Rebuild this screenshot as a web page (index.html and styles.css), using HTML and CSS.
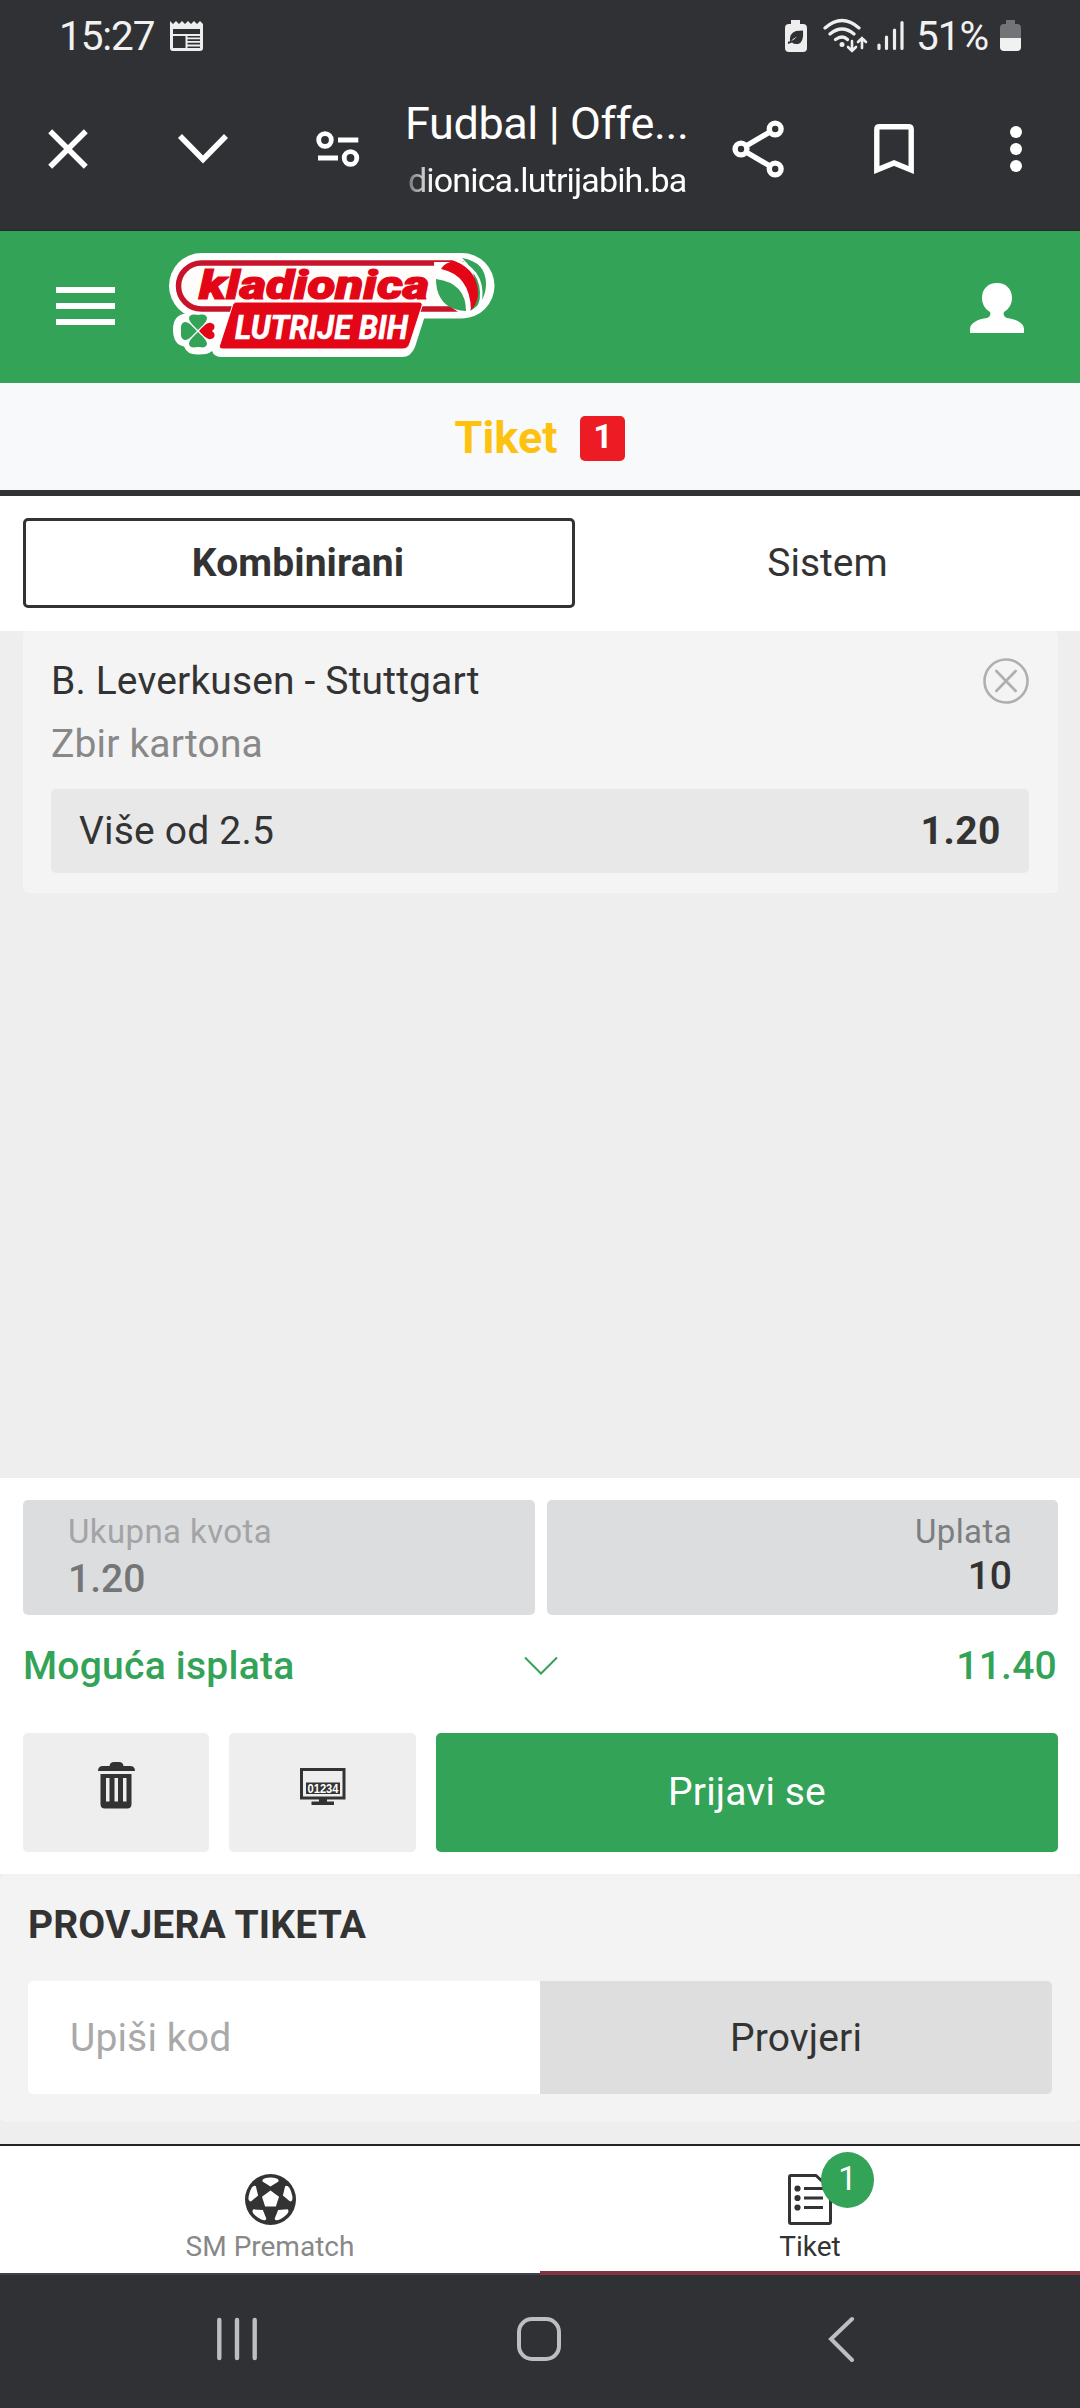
FILE: index.html
```html
<!DOCTYPE html>
<html lang="bs">
<head>
<meta charset="utf-8">
<title>Fudbal | Offer</title>
<link rel="stylesheet" href="styles.css">
</head>
<body>
<div class="status">
  <span class="clock">15:27</span>
  <svg class="news" width="34" height="30" viewBox="0 0 34 30"><path fill="#eee" fill-rule="evenodd" d="M0 0l3 3 3-3 3 3 3-3 3 3 3-3 3 3 3-3 3 3 3-3 3 3V27q0 3-3 3H3q-3 0-3-3zM3 8v5h27V8zM3 15v12h12.500V15zM17.500 15v1.500H30V15zM17.500 18.200v1.800H30v-1.800zM17.500 21.800v1.800H30v-1.800zM17.500 25.400v1.600H30v-1.600z"/></svg>
  <svg class="status-icons" width="124" height="36" viewBox="784 17 124 36">
    <path fill="#eee" d="M791 19h9v4h3q4 0 4 4v20q0 4-4 4h-14q-4 0-4-4V27q0-4 4-4h2z"/>
    <path fill="#303134" d="M790 41q-1-9 6-11l7-.500q1 12-5 13.500-4 .500-6-1.500l-4 1.500v-2.500q5 0 9-5-4 2-7 5.500z"/>
    <g fill="none" stroke="#eee" stroke-width="3.200" stroke-linecap="round">
      <path d="M825 27q17-15 34 0M830 33q12-10 24 0M835.500 38.500q7-5 12 0"/>
      <path stroke-width="2.600" d="M852 40v10m-4-4l4 4 4-4M862 47v-10m-4 4l4-4 4 4"/>
      <path d="M879 44v3.500M886.500 36v11.500M894.500 29v18.500M902 21.500v26"/>
    </g>
    <circle cx="842" cy="43.500" r="2.500" fill="#eee"/>
  </svg>
  <span class="percent">51%</span>
  <svg class="battery" width="21" height="32" viewBox="0 0 21 32"><path fill="#737477" d="M6 0h9v4h2q4 0 4 4v10H0V8q0-4 4-4h2z"/><path fill="#f1f1f1" d="M0 18h21v9q0 4-4 4H4q-4 0-4-4z"/></svg>
</div>

<div class="browser">
  <svg width="324" height="60" viewBox="40 119 324 60" fill="none" stroke="#fff" stroke-width="5.600">
    <path d="M50.200 131.200l35.600 35.600M85.800 131.200l-35.600 35.600M180 136l23 23.500 23-23.500"/>
    <g stroke-width="4.800"><circle cx="325" cy="140" r="6.300"/><circle cx="350.500" cy="158" r="6.300"/><path d="M338 140h20.300M318 158h20"/></g>
  </svg>
  <div class="page-id">
    <div class="page-title">Fudbal | Offe...</div>
    <div class="page-url">dionica.lutrijabih.ba</div>
  </div>
  <svg width="300" height="60" viewBox="728 119 300 60" fill="none" stroke="#fff" stroke-width="5.400">
    <path d="M775 129l-34 20 34 20"/>
    <g fill="#303134"><circle cx="741" cy="149" r="5.900"/><circle cx="775.200" cy="129" r="5.900"/><circle cx="775.200" cy="169" r="5.900"/></g>
    <path d="M876.800 170V129.500q0-2.700 2.700-2.700h29q2.700 0 2.700 2.700V170l-17.200-7z"/>
    <g fill="#fff" stroke="none"><circle cx="1016" cy="132" r="6"/><circle cx="1016" cy="149" r="6"/><circle cx="1016" cy="166" r="6"/></g>
  </svg>
</div>

<header class="site-head">
  <div class="burger"><i></i><i></i><i></i></div>
  <svg class="logo" width="326" height="105" viewBox="169 253 326 105">
    <g fill="#fff">
      <rect x="169" y="253" width="325.500" height="65.500" rx="32.700"/>
      <path d="M196 300h234l-15 47q-4 10-13 10H222q-8 0-10-6-4 4-15 3.500-10 0-13-8-11-2-11-17 0-14 12-16z"/>
    </g>
    <rect x="178.500" y="263" width="300" height="46" rx="23" fill="#fffdfa" stroke="#c8142a" stroke-width="5.500"/>
    <path fill="#fff" d="M434 262h45q12 10 11 27-3 22-30 24-26-14-26-51z"/>
    <path fill="#33a357" d="M462 258q24 4 24 26 0 18-16 27 14-34-8-53z"/>
    <path fill="#e30617" d="M441 269q4-7 14-8 24 10 23 35-2 10-7 14-1-35-30-41z"/>
    <path fill="none" stroke="#fff" stroke-width="2.500" d="M453 259q31 10 28 40-2 9-6 13"/>
    <path fill="#33a357" d="M436 279q30 4 30 32-24-1-29-22-1-5-1-10z"/>
    <path fill="#e30617" stroke="#fff" stroke-width="1" d="M237 302h182q4 0 3 4l-12 37q-2 6-7 6H223q-5 0-3-5l12-37q1-5 5-5z"/>
    <g fill="#33a357"><path d="M198 330c-4-4-9-8-9-12 1-5 7-3 9-3s8-2 9 3c0 4-5 8-9 12zM198 332c-4 4-9 8-9 12 1 5 7 3 9 3s8 2 9-3c0-4-5-8-9-12zM197 331c-4-4-8-9-12-9-5 1-4 7-4 9s-1 8 4 9c4 0 8-5 12-9z"/></g>
    <path fill="#e30617" d="M199 331c4-4 8-9 12-8 4 1 4 4 3 6l-2 2 2 2c1 2 1 5-3 6-4 1-8-4-12-8z"/>
    <text class="logo-top" x="199" y="298.500" textLength="230" lengthAdjust="spacingAndGlyphs">kladionica</text>
    <text class="logo-bottom" x="235" y="338.700" textLength="173" lengthAdjust="spacingAndGlyphs">LUTRIJE BIH</text>
  </svg>
  <svg class="user" width="54" height="50" viewBox="0 0 54 50"><path fill="#fff" d="M27 0C36 0 42 6 42 15c0 6-3 11-8 14-1 2 0 5 3 6 9 1 17 5 17 11v4H0v-4c0-6 8-10 17-11 3-1 4-4 3-6-5-3-8-8-8-14C12 6 18 0 27 0z"/></svg>
</header>

<div class="ticket-head"><span class="ticket-title">Tiket</span><span class="ticket-count">1</span></div>

<div class="tabs"><div class="tab tab-on">Kombinirani</div><div class="tab">Sistem</div></div>

<main class="list">
  <section class="bet">
    <div class="bet-top"><span>B. Leverkusen - Stuttgart</span>
      <svg width="46" height="46" viewBox="-23 -23 46 46" fill="none" stroke="#afafaf" stroke-width="2.600" stroke-linecap="round"><circle r="21.500"/><path d="M-9.700-10l19.400 20M9.700-10l-19.400 20"/></svg>
    </div>
    <div class="bet-market">Zbir kartona</div>
    <div class="bet-pick"><span>Više od 2.5</span><b>1.20</b></div>
  </section>
</main>

<section class="summary">
  <div class="fields">
    <div class="field field-odds"><span class="field-label">Ukupna kvota</span><span class="field-value">1.20</span></div>
    <div class="field field-stake"><span class="field-label">Uplata</span><span class="field-value">10</span></div>
  </div>
  <div class="payout"><span class="payout-label">Moguća isplata</span>
    <svg width="34" height="20" viewBox="0 0 34 20" fill="none" stroke="#33a357" stroke-width="2"><path d="M1 1.500l16 16 16-16"/></svg>
    <span class="payout-value">11.40</span></div>
  <div class="actions">
    <div class="action">
      <svg width="37" height="47" viewBox="0 0 37 47"><path fill="#333" fill-rule="evenodd" d="M0 9q0-5 5-5h6.500Q12 0 16 0h5q4 0 4.500 4H32q5 0 5 5zM2.500 12h31v30q0 4.500-4.500 4.500H7q-4.500 0-4.500-4.500zM8 16v23.500h3.500V16zM16.500 16v23.500H20V16zM25 16v23.500h3.500V16z"/></svg>
    </div>
    <div class="action">
      <svg width="46" height="38" viewBox="0 0 46 38"><path fill="none" stroke="#333" stroke-width="3" d="M1.500 1.500h42.500V30H1.500z"/><path fill="#333" d="M6 14.500h34V26H6zM19 30h8v3.500h7V37H11.500v-3.500H19z"/><text class="digits" x="7.500" y="24.700" textLength="31" lengthAdjust="spacingAndGlyphs">01234</text></svg>
    </div>
    <div class="submit">Prijavi se</div>
  </div>
</section>

<section class="check">
  <h2>PROVJERA TIKETA</h2>
  <div class="check-row"><div class="code">Upiši kod</div><div class="check-btn">Provjeri</div></div>
</section>

<nav class="tabbar">
  <div class="item">
    <svg width="51" height="51" viewBox="-25.500 -25.500 51 51"><circle r="25.500" fill="#333"/><g fill="#fff"><path d="M0-9l8.500 6.200L5.400 7H-5.400L-8.500-2.800z"/><path id="p" d="M-8-19.500Q-7-22 0-22T8-19.500V-18L0-13-8-18z"/><use href="#p" transform="rotate(72)"/><use href="#p" transform="rotate(144)"/><use href="#p" transform="rotate(216)"/><use href="#p" transform="rotate(288)"/></g></svg>
    <span>SM Prematch</span>
  </div>
  <div class="item item-on">
    <div class="doc">
      <svg width="44" height="51" viewBox="0 0 44 51"><path fill="none" stroke="#333" stroke-width="3" stroke-linejoin="round" d="M1.500 3q0-1.500 1.500-1.500H28L42.500 15v33q0 1.500-1.500 1.500H3q-1.500 0-1.500-1.500z"/><g fill="#333"><circle cx="9.500" cy="14.500" r="3.100"/><circle cx="9.500" cy="24" r="3.100"/><circle cx="9.500" cy="33.500" r="3.100"/><path d="M16 13h19v3H16zM16 22.500h19v3H16zM16 32h19v3H16z"/></g></svg>
      <span class="bubble">1</span>
    </div>
    <span>Tiket</span>
  </div>
</nav>

<footer class="sysnav">
  <svg width="40" height="46" viewBox="217 2315 40 46" fill="none" stroke="#bdbec0" stroke-width="4.400" stroke-linecap="round"><path d="M219.300 2319v38M237 2319v38M254.700 2319v38"/></svg>
  <svg width="44" height="46" viewBox="517 2315 44 46" fill="none" stroke="#bdbec0" stroke-width="4"><rect x="519" y="2318" width="40" height="40" rx="13"/></svg>
  <svg width="27" height="46" viewBox="829 2315 27 46" fill="none" stroke="#bdbec0" stroke-width="4" stroke-linecap="round"><path d="M853 2318l-21 20 21 21"/></svg>
</footer>
</body>
</html>
```
FILE: styles.css
```css
* { box-sizing: border-box; }
body {
  margin: 0;
  width: 1080px;
  height: 2408px;
  overflow: hidden;
  display: flex;
  flex-direction: column;
  background: #eee;
  color: #333;
  font: 400 39px/46px Roboto, "Liberation Sans", sans-serif;
  white-space: nowrap;
}
body > * { flex: none; }
svg { display: block; flex: none; }

.status {
  height: 72px;
  padding: 0 59px;
  display: flex;
  align-items: center;
  background: #303134;
  color: #f1f1f1;
  font-size: 40.5px;
}
.clock { width: 111px; letter-spacing: -1.1px; }
.status-icons { margin-left: auto; }
.percent { margin-left: 8px; width: 84px; letter-spacing: -1px; }

.browser {
  height: 159px;
  padding: 0 52px 3px 40px;
  display: flex;
  align-items: center;
  background: #303134;
  border-bottom: 2px solid #26312b;
  color: #fff;
}
.page-id { width: 286px; margin: 0 37px 0 41px; }
.page-title { font-size: 45px; line-height: 62px; letter-spacing: -0.4px; }
.page-url {
  padding-left: 3px;
  font-size: 34px;
  line-height: 50px;
  letter-spacing: -0.85px;
  -webkit-mask-image: linear-gradient(90deg, rgba(0,0,0,.25), #000 28px);
  mask-image: linear-gradient(90deg, rgba(0,0,0,.25), #000 28px);
}

.site-head {
  height: 152px;
  padding: 0 56px;
  display: flex;
  align-items: center;
  background: #33a357;
}
.burger { width: 59px; height: 38px; margin-bottom: 3px; display: flex; flex-direction: column; justify-content: space-between; }
.burger i { height: 6px; background: #fff; }
.logo { margin-left: 54px; margin-bottom: 4px; }
.user { margin-left: auto; margin-top: 2px; }
.logo-top { font: italic 900 41px Roboto, sans-serif; fill: #e30617; stroke: #e30617; stroke-width: 1.2px; }
.logo-bottom { font: italic 700 33.5px Roboto, sans-serif; fill: #fff; stroke: #fff; stroke-width: .6px; }

.ticket-head {
  height: 113px;
  padding-top: 3px;
  display: flex;
  align-items: center;
  justify-content: center;
  gap: 23px;
  background: #f8f9fb;
  border-bottom: 6px solid #333;
}
.ticket-title { color: #fdc210; font-size: 45px; font-weight: 700; }
.ticket-count {
  width: 45px;
  height: 45px;
  border-radius: 5px;
  background: #ed1c24;
  color: #fff;
  font-size: 34px;
  font-weight: 700;
  line-height: 41px;
  text-align: center;
}

.tabs { height: 135px; padding: 22px 0 23px 23px; display: flex; background: #fff; }
.tab { flex: 1; display: flex; align-items: center; justify-content: center; }
.tab-on { flex: 0 0 552px; padding-right: 2px; border: 3px solid #333; border-radius: 5px; font-weight: 700; letter-spacing: .1px; }

.list { height: 847px; padding: 0 22px 0 23px; }
.bet { height: 262px; padding: 27px 29px 0 28px; background: #f4f4f4; border-radius: 5px; }
.bet-top { height: 46px; display: flex; align-items: center; justify-content: space-between; letter-spacing: .15px; }
.bet-market { margin-top: 17px; color: #888; letter-spacing: .15px; }
.bet-pick {
  height: 84px;
  margin-top: 22px;
  padding: 0 28px;
  display: flex;
  align-items: center;
  justify-content: space-between;
  background: #e8e8e8;
  border-radius: 5px;
  letter-spacing: .2px;
}
.bet-pick b { letter-spacing: .5px; }

.summary { height: 396px; padding: 22px 22px 0 23px; background: #fff; }
.fields { height: 115px; display: grid; grid-template-columns: 1fr 1fr; gap: 12px; }
.field { padding: 9px 46px 0 45px; display: flex; flex-direction: column; background: #dcdddf; border-radius: 5px; }
.field-label { font-size: 33px; line-height: 46px; letter-spacing: .4px; }
.field-value { font-weight: 500; }
.field-odds { color: #747576; }
.field-odds .field-label { color: #a3a4a5; }
.field-odds .field-value { margin-top: 1px; }
.field-stake { align-items: flex-end; }
.field-stake .field-label { color: #7d7e80; }
.field-stake .field-value { margin-top: -2px; }
.payout {
  height: 118px;
  padding-bottom: 17px;
  display: grid;
  grid-template-columns: 1fr auto 1fr;
  align-items: center;
  color: #33a357;
  font-weight: 500;
  letter-spacing: .25px;
}
.payout-value { text-align: right; padding-right: 1px; }
.actions { height: 119px; display: grid; grid-template-columns: 186px 187px 1fr; gap: 20px; }
.action { display: flex; justify-content: center; padding-top: 29px; background: #eee; border-radius: 5px; }
.action + .action { padding-top: 35px; }
.submit { background: #33a357; color: #fff; border-radius: 5px; line-height: 118px; text-align: center; letter-spacing: .15px; }
.digits { font: 700 12px "Liberation Sans", sans-serif; fill: #fff; }

.check { height: 248px; padding: 28px 28px 0; background: #f3f3f3; border-radius: 6px; }
.check h2 { margin: 0; font-size: 39px; line-height: 46px; font-weight: 700; letter-spacing: .1px; }
.check-row { margin-top: 33px; height: 113px; display: grid; grid-template-columns: 1fr 1fr; line-height: 115px; border-radius: 5px; overflow: hidden; letter-spacing: .15px; }
.code { padding-left: 42px; background: #fff; color: #a9a9a9; }
.check-btn { background: #dedede; text-align: center; }

.tabbar { height: 131px; margin-top: 22px; display: grid; grid-template-columns: 1fr 1fr; background: #fff; border-top: 2px solid #222; }
.item {
  padding-top: 28px;
  display: flex;
  flex-direction: column;
  align-items: center;
  color: #888;
  font-size: 28px;
  line-height: 43px;
  border-bottom: 2px solid #3e4147;
}
.item-on { color: #333; border-bottom: 4px solid #83353f; }
.doc { position: relative; }
.bubble {
  position: absolute;
  left: 33px;
  top: -22px;
  width: 53px;
  height: 56px;
  border-radius: 50%;
  background: #33a357;
  color: #fff;
  font-size: 33px;
  line-height: 54px;
  text-align: center;
}

.sysnav { flex: 1; padding: 0 225px 6px 217px; display: grid; grid-template-columns: 300px 1fr auto; align-items: center; background: #303134; }
```
